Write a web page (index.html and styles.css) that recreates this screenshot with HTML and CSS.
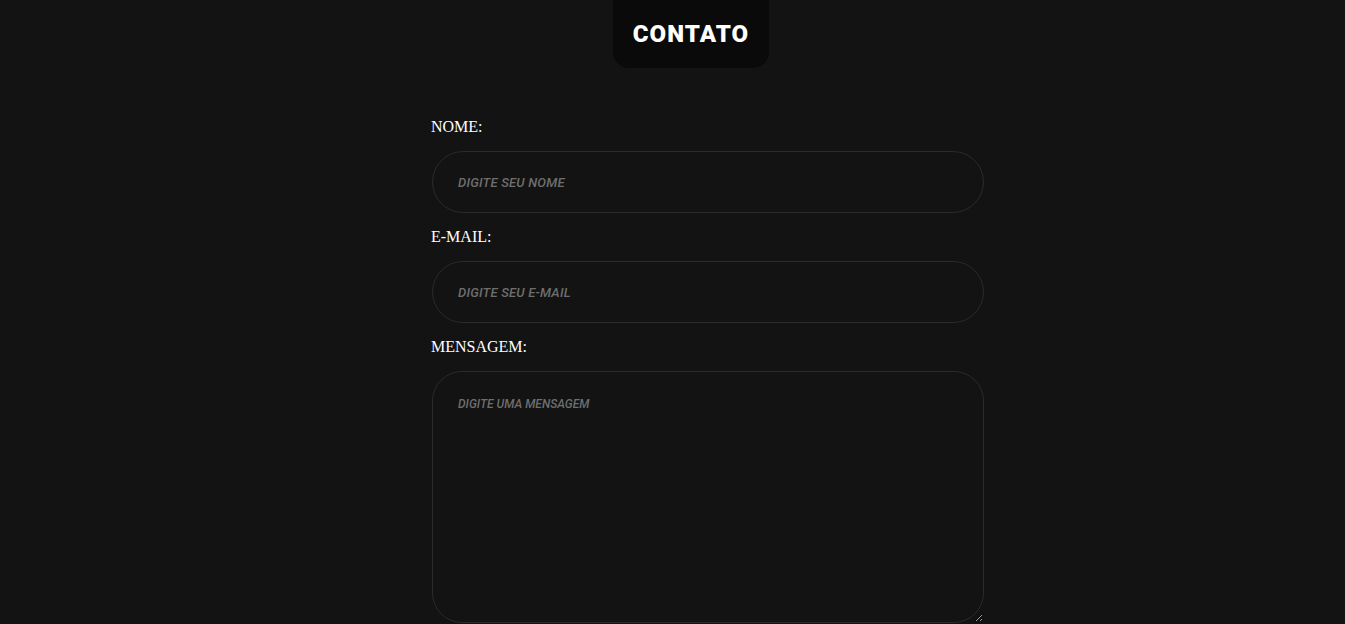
FILE: index.html
```html
<!DOCTYPE html>
<html lang="pt">
<head>
<meta charset="utf-8">
<title>Contato</title>
<link rel="stylesheet" href="styles.css">
</head>
<body>
<header class="top">
  <h1 class="title">CONTATO</h1>
</header>
<form class="form">
  <label class="label" for="nome">NOME:</label>
  <input class="field" id="nome" type="text" placeholder="DIGITE SEU NOME">
  <label class="label" for="email">E-MAIL:</label>
  <input class="field" id="email" type="email" placeholder="DIGITE SEU E-MAIL">
  <label class="label" for="msg">MENSAGEM:</label>
  <textarea class="field area" id="msg" placeholder="DIGITE UMA MENSAGEM"></textarea>
</form>
</body>
</html>
```
FILE: styles.css
```css
html, body {
  margin: 0;
  padding: 0;
  background: #131313;
  height: 100%;
  overflow: hidden;
}
body {
  font-family: "Liberation Serif", "Times New Roman", serif;
  color: #ffffff;
}
.top {
  display: flex;
  justify-content: center;
  padding-left: 37px;
}
.title {
  margin: 0;
  background: #0a0a0a;
  border-radius: 0 0 16px 16px;
  padding: 0 20px;
  height: 68px;
  line-height: 68px;
  font-family: Roboto, "Liberation Sans", sans-serif;
  font-weight: 900;
  font-size: 24px;
  letter-spacing: 1.1px;
}
.form {
  display: flex;
  flex-direction: column;
  width: 553px;
  margin: 50px 0 0 431px;
}
.label {
  font-size: 16px;
  line-height: 18px;
  margin-bottom: 15px;
}
.field {
  box-sizing: border-box;
  height: 62px;
  margin: 0 0 15px 1px;
  width: 552px;
  background: #131313;
  border: 1px solid #2b2b2b;
  border-radius: 31px;
  padding: 1px 25px 0;
  color: #ddd;
  font-family: Roboto, "Liberation Sans", sans-serif;
  font-style: italic;
  font-weight: 500;
  font-size: 13px;
  letter-spacing: 0.2px;
  outline: none;
}
.field::placeholder {
  color: #6e6e6e;
}
.area {
  height: 252px;
  padding: 25px 25px;
  border-radius: 30px;
  resize: vertical;
  margin-bottom: 0;
  font-size: 12px;
  letter-spacing: 0;
}
```
